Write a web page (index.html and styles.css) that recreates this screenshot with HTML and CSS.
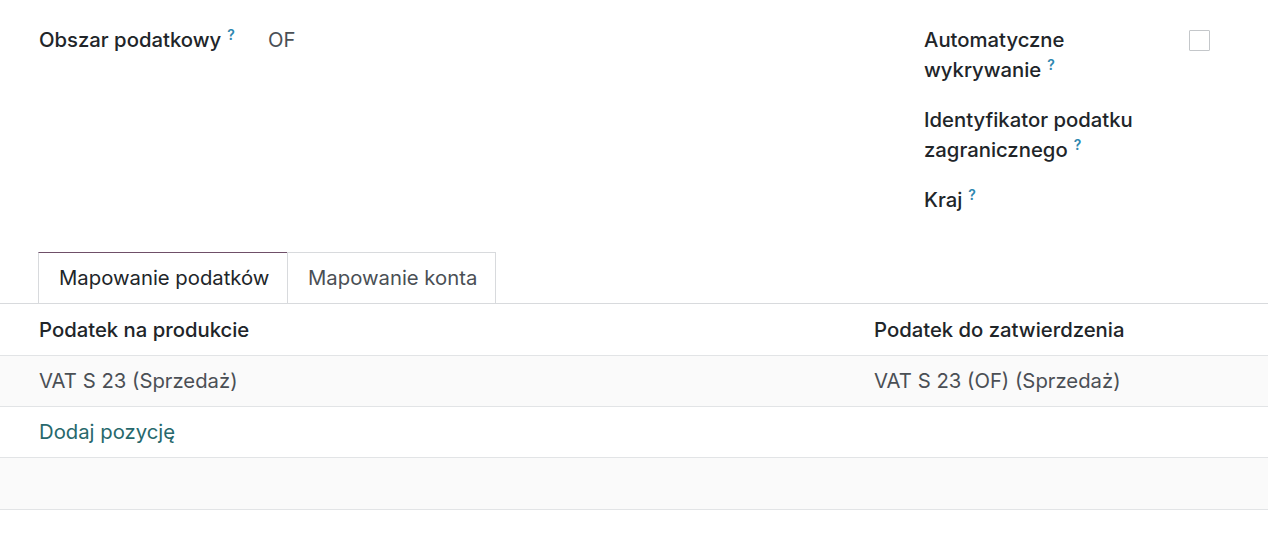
FILE: index.html
```html
<!DOCTYPE html>
<html lang="pl">
<head>
<meta charset="utf-8">
<link rel="stylesheet" href="styles.css">
</head>
<body>
<div class="sheet">
  <div class="top">
    <div class="group group-left">
      <div class="field">
        <div class="label">Obszar podatkowy<sup class="help">?</sup></div>
        <div class="value">OF</div>
      </div>
    </div>
    <div class="group group-right">
      <div class="field">
        <div class="label">Automatyczne wykrywanie<sup class="help">?</sup></div>
        <div class="value"><span class="checkbox"></span></div>
      </div>
      <div class="field">
        <div class="label">Identyfikator podatku zagranicznego<sup class="help">?</sup></div>
        <div class="value"></div>
      </div>
      <div class="field">
        <div class="label">Kraj<sup class="help">?</sup></div>
        <div class="value"></div>
      </div>
    </div>
  </div>
  <div class="tabs">
    <div class="tab active">Mapowanie podatków</div>
    <div class="tab">Mapowanie konta</div>
  </div>
  <div class="table">
    <div class="row head">
      <div class="cell c1">Podatek na produkcie</div>
      <div class="cell c2">Podatek do zatwierdzenia</div>
    </div>
    <div class="row odd">
      <div class="cell c1">VAT S 23 (Sprzedaż)</div>
      <div class="cell c2">VAT S 23 (OF) (Sprzedaż)</div>
    </div>
    <div class="row">
      <div class="cell c1"><span class="link">Dodaj pozycję</span></div>
    </div>
    <div class="row odd last">
      <div class="cell c1"></div>
    </div>
  </div>
</div>
</body>
</html>
```
FILE: styles.css
```css
* { box-sizing: border-box; }
html, body { margin: 0; padding: 0; background: #fff; }
body {
  font-family: Inter, "Noto Sans", "Liberation Sans", sans-serif;
  font-size: 20.3px;
  color: #212529;
  width: 1268px;
  height: 538px;
  overflow: hidden;
}
.top {
  display: flex;
  padding: 25px 0 0 39px;
  height: 252px;
}
.group-left { width: 885px; }
.group-right { width: 344px; display: flex; flex-direction: column; gap: 20px; }
.field { display: flex; align-items: flex-start; }
.label {
  font-weight: 500;
  line-height: 30px;
  color: #212529;
}
.group-left .label { width: 229px; white-space: nowrap; }
.group-right .label { width: 265px; padding-right: 20px; }
.value { color: #4a4f55; line-height: 30px; }
.help {
  color: #2f88b0;
  font-size: 14px;
  line-height: 1;
  font-weight: 600;
  margin-left: 6px;
  vertical-align: top;
  position: relative;
  top: 3px;
}
.checkbox {
  display: block;
  width: 21px;
  height: 21px;
  border: 1px solid #c4c7ca;
  border-radius: 1px;
  margin-top: 5px;
}
.tabs {
  display: flex;
  padding-left: 38px;
  border-bottom: 1px solid #d8dadd;
  height: 52px;
}
.tab {
  height: 51px;
  padding: 0 19px 0 20px;
  line-height: 50px;
  white-space: nowrap;
  border: 1px solid #d8dadd;
  border-bottom: none;
  color: #4a4f55;
}
.tab.active {
  color: #212529;
  border-top-color: #6f4f68;
  border-right: none;
  background: #fff;
  width: 249px;
}
.tab + .tab { width: 209px; }
.row {
  display: flex;
  height: 51px;
  border-bottom: 1px solid #e2e4e6;
  align-items: center;
}
.row.head { height: 52px; }
.row.last { height: 52px; }
.row.odd { background: #fafafa; }
.row.head { font-weight: 500; color: #212529; }
.cell { line-height: 30px; }
.c1 { padding-left: 39px; width: 874px; }
.row:not(.head) .cell { color: #4a4f55; }
.link { color: #27686c; }
```
